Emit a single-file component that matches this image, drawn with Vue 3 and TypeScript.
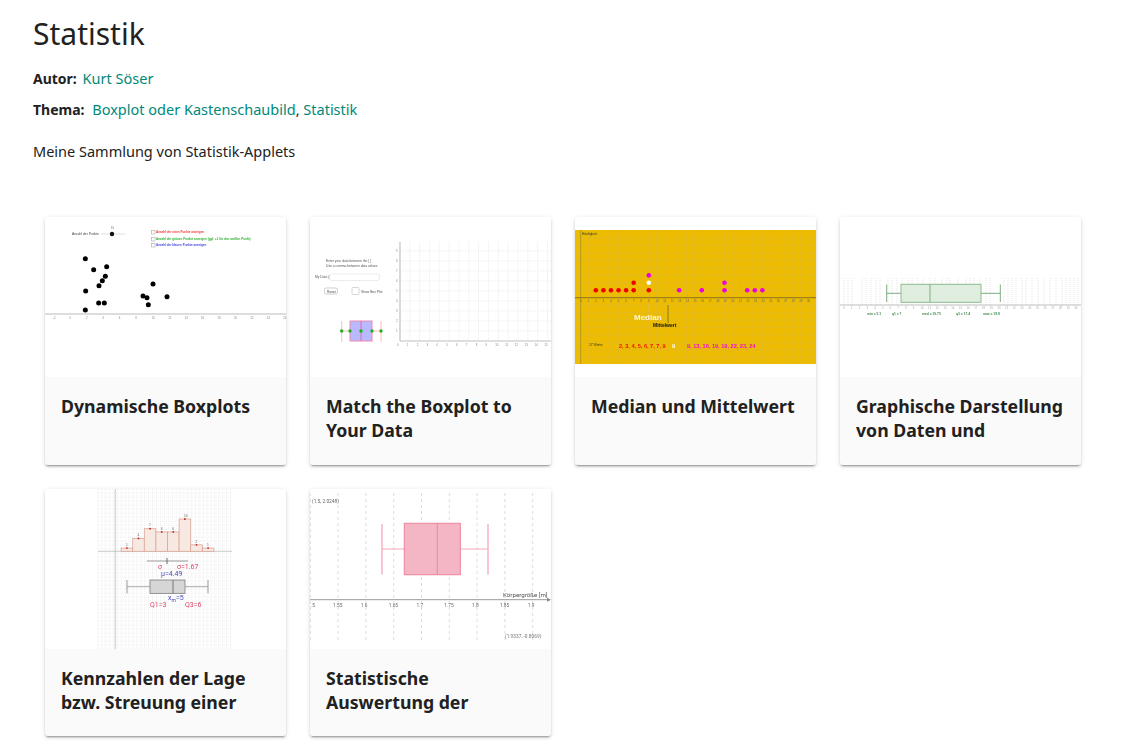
<script setup lang="ts">
const range = (a: number, b: number) => Array.from({ length: b - a + 1 }, (_, i) => a + i)

const cards = [
  { id: 'dyn', title: 'Dynamische Boxplots' },
  { id: 'match', title: 'Match the Boxplot to Your Data' },
  { id: 'median', title: 'Median und Mittelwert' },
  { id: 'graph', title: 'Graphische Darstellung von Daten und' },
  { id: 'kenn', title: 'Kennzahlen der Lage bzw. Streuung einer' },
  { id: 'stat', title: 'Statistische Auswertung der' },
]

const dynPoints = [[136,146],[161,179],[200,170],[196,199],[187,212],[177,227],[137,243],[176,279],[193,279],[136,300],[309,258],[321,263],[339,222],[381,260],[325,284]]
  .map(([x, y]) => [x / 3 - 5, y / 3 - 7])
const dynTicks = range(0, 14).map((i) => 8 + i * 16.45)
const dynChecks = [
  { y: 15, c: '#f04040', t: 'Anzahl der roten Punkte anzeigen' },
  { y: 22, c: '#30b030', t: 'Anzahl der grünen Punkte anzeigen (ggf. +1 für den weißen Punkt)' },
  { y: 28, c: '#4848e0', t: 'Anzahl der blauen Punkte anzeigen' },
]

const matchV = range(0, 15).map((i) => 90 + i * 9.83)
const matchH = range(0, 9).map((i) => 124 - i * 10)

const medV = range(0, 31).map((i) => 5.7 + i * 7.57)
const medH = range(-8, 8).map((i) => 80.7 - i * 7.45)
const medPts = [
  ...[2,3,4,5,6,7,9].map((n) => ({ n, l: 1, c: '#ee0000' })),
  { n: 7, l: 2, c: '#ee0000' },
  { n: 9, l: 2, c: '#ffffff' },
  ...[13,16,19,22,23,24].map((n) => ({ n, l: 1, c: '#e800e0' })),
  { n: 19, l: 2, c: '#e800e0' },
  { n: 9, l: 3, c: '#e800e0' },
].map((p) => ({ x: 5.7 + p.n * 7.57, y: 80.7 - p.l * 7.45, c: p.c }))

const graphV = [4,8,12,22,26,31,36,40,48,52,57,62,68,72,78,83,90,95,102,107,110,118,126,130,134,140,146,150,164,168,172,176,182,186,192,198,204,210,216,222,226,230,234,238]
const graphT = range(0, 30).map((i) => 4 + i * 7.7)

const kennV = range(0, 34).map((i) => 53 + i * 3.9)
const kennH = range(0, 40).map((i) => i * 4)
const kennBars = [1,4,7,6,6,10,2,1].map((v, i) => ({
  x: 70.3 + (i + 0.5) * 11.6,
  h: v * 3.23,
  v,
  c: 70.3 + (i + 1) * 11.6,
}))

const statV = range(0, 8).map((i) => 0.3 + i * 27.8)
const statLabels = ['.5','1.55','1.6','1.65','1.7','1.75','1.8','1.85','1.9']
</script>

<template>
  <main class="page">
    <h1 class="heading">Statistik</h1>
    <p class="meta first"><strong>Autor:</strong> <a class="link gap-a">Kurt Söser</a></p>
    <p class="meta"><strong>Thema:</strong> <a class="link gap-b">Boxplot oder Kastenschaubild</a>, <a class="link">Statistik</a></p>
    <p class="desc">Meine Sammlung von Statistik-Applets</p>

    <section class="grid">
      <article v-for="card in cards" :key="card.id" class="card">
        <div class="thumb">
          <svg v-if="card.id === 'dyn'" class="art" viewBox="0 0 241 160">
            <text x="27" y="18" class="t3" fill="#444">Anzahl der Punkte</text>
            <line x1="56" y1="17" x2="80" y2="17" stroke="#ddd" />
            <circle cx="67" cy="17" r="2.2" fill="#111" />
            <text x="66" y="12" class="t2" fill="#666">15</text>
            <g v-for="c in dynChecks" :key="c.y">
              <rect x="106.5" :y="c.y - 1.5" width="3.5" height="3.5" fill="#fff" stroke="#aaa" stroke-width=".6" />
              <text x="111" :y="c.y + 1" class="t2b" :fill="c.c">{{ c.t }}</text>
            </g>
            <line x1="0" y1="97" x2="241" y2="97" stroke="#bbb" stroke-width="1.2" />
            <g v-for="(t, i) in dynTicks" :key="t">
              <text :x="t" y="101.5" class="t2" fill="#888">{{ i * 2 - 2 }}</text>
            </g>
            <circle v-for="p in dynPoints" :key="p[0] + '-' + p[1]" :cx="p[0]" :cy="p[1]" r="2.5" fill="#000" />
          </svg>

          <svg v-else-if="card.id === 'match'" class="art" viewBox="0 0 241 160">
            <line v-for="x in matchV" :key="x" :x1="x" y1="25" :x2="x" y2="124" stroke="#e4e4e4" stroke-width=".6" stroke-dasharray="1.5 1" />
            <line v-for="y in matchH" :key="y" x1="90" :y1="y" x2="241" :y2="y" stroke="#e4e4e4" stroke-width=".6" stroke-dasharray="1.5 1" />
            <line x1="90" y1="25" x2="90" y2="124" stroke="#c4c4c4" stroke-width="1.2" />
            <line x1="90" y1="124" x2="241" y2="124" stroke="#c4c4c4" stroke-width="1.2" />
            <text v-for="(x, i) in matchV" :key="'xl' + x" :x="x - 3" y="128.5" class="t2" fill="#888">{{ i }}</text>
            <text v-for="(y, i) in matchH.slice(1)" :key="'yl' + y" x="86" :y="y + 1" class="t2" fill="#888">{{ i + 1 }}</text>
            <text x="16" y="45" class="t3" fill="#555">Enter your data between the { }</text>
            <text x="16" y="49.5" class="t3" fill="#555">Use a comma between data values</text>
            <text x="5" y="61" class="t3" fill="#555">My Data {}</text>
            <rect x="19.5" y="57" width="50" height="6.5" rx="2" fill="#fff" stroke="#e4e4e4" stroke-width=".7" />
            <rect x="14.5" y="71" width="13" height="6" rx="1.5" fill="#fff" stroke="#bbb" stroke-width=".7" />
            <text x="17" y="75.5" class="t3" fill="#444">Reset</text>
            <rect x="42" y="70.5" width="7" height="7" rx="1" fill="#fff" stroke="#ccc" stroke-width=".8" />
            <text x="51" y="75.5" class="t3" fill="#555">Show Box Plot</text>
            <line x1="31.7" y1="104" x2="31.7" y2="125" stroke="#fbb" />
            <line x1="71" y1="104" x2="71" y2="125" stroke="#fbb" />
            <line x1="31.7" y1="114" x2="71" y2="114" stroke="#fbb" />
            <rect x="40" y="104" width="22" height="20" fill="#b9b9ff" stroke="#f08ab0" />
            <line x1="51" y1="104" x2="51" y2="124" stroke="#e070a0" />
            <circle v-for="x in [31.7, 40, 51, 62, 71]" :key="x" :cx="x" cy="114" r="1.7" fill="#22b022" />
          </svg>

          <svg v-else-if="card.id === 'median'" class="art" viewBox="0 0 241 160">
            <rect x="0" y="13" width="241" height="134" fill="#edbc00" />
            <line v-for="x in medV" :key="x" :x1="x" y1="13" :x2="x" y2="147" stroke="#dcb93a" stroke-width=".5" />
            <line v-for="y in medH" :key="y" x1="0" :y1="y" x2="241" :y2="y" stroke="#dcb93a" stroke-width=".5" />
            <line x1="5.7" y1="13" x2="5.7" y2="147" stroke="#b09a1c" />
            <line x1="0" y1="80.7" x2="241" y2="80.7" stroke="#8a7614" />
            <text x="7" y="18" class="t3" fill="#333">Häufigkeit</text>
            <text v-for="(x, i) in medV.slice(0, 31)" :key="x" :x="x - 0.8" y="85" class="t2" fill="#665">{{ i }}</text>
            <circle v-for="p in medPts" :key="p.x + '-' + p.y" :cx="p.x" :cy="p.y" r="2.3" :fill="p.c" />
            <line x1="74" y1="88" x2="74" y2="95" stroke="#d8c050" />
            <line x1="93" y1="88" x2="93" y2="106" stroke="#887a20" />
            <text x="59" y="103" class="t-med" fill="#fff7d0">Median</text>
            <text x="78" y="110" class="t-mit" fill="#111">Mittelwert</text>
            <text x="14" y="129" class="t3" fill="#333">17 Werte:</text>
            <text x="44" y="131" class="t-ser" fill="#ee1500">2, 3, 4, 5, 6, 7, 7, 9</text>
            <text x="97" y="131" class="t-ser" fill="#fff">9</text>
            <text x="112" y="131" class="t-ser" fill="#ee10d0">9, 13, 16, 19, 19, 22, 23, 24</text>
          </svg>

          <svg v-else-if="card.id === 'graph'" class="art" viewBox="0 0 241 160">
            <line v-for="x in graphV" :key="x" :x1="x" y1="61" :x2="x" y2="88" stroke="#d4d4d4" stroke-width=".6" stroke-dasharray="1 1" />
            <line x1="0" y1="88" x2="241" y2="88" stroke="#c0c0c0" stroke-width="1.1" />
            <text v-for="(x, i) in graphT" :key="x" :x="x - .6" y="91.5" class="t2" fill="#aaa">{{ i }}</text>
            <rect x="61" y="67.3" width="80" height="18" fill="#e0eee0" stroke="#8dbb8d" stroke-width="1" />
            <line x1="90" y1="67.3" x2="90" y2="85.3" stroke="#8dbb8d" stroke-width="1.2" />
            <line x1="46.7" y1="67.5" x2="46.7" y2="85" stroke="#7fae7f" />
            <line x1="160.3" y1="67.5" x2="160.3" y2="85" stroke="#7fae7f" />
            <line x1="46.7" y1="76.3" x2="61" y2="76.3" stroke="#7fae7f" />
            <line x1="141" y1="76.3" x2="160.3" y2="76.3" stroke="#7fae7f" />
            <text x="27" y="97.5" class="t3b">min = 5.1</text>
            <text x="52" y="97.5" class="t3b">q1 = 7</text>
            <text x="82" y="97.5" class="t3b">med = 10.75</text>
            <text x="116" y="97.5" class="t3b">q3 = 17.4</text>
            <text x="143" y="97.5" class="t3b">max = 19.9</text>
          </svg>

          <svg v-else-if="card.id === 'kenn'" class="art" viewBox="0 0 241 160">
            <line v-for="x in kennV" :key="x" :x1="x" y1="0" :x2="x" y2="160" stroke="#dedede" stroke-width=".5" stroke-dasharray="1 1" />
            <line v-for="y in kennH" :key="y" x1="53" :y1="y" x2="187" :y2="y" stroke="#dedede" stroke-width=".5" stroke-dasharray="1 1" />
            <line x1="70.3" y1="0" x2="70.3" y2="160" stroke="#b4b4b4" stroke-width=".7" />
            <line x1="53" y1="62.3" x2="187" y2="62.3" stroke="#b4b4b4" stroke-width=".7" />
            <g v-for="b in kennBars" :key="b.x">
              <rect :x="b.x" :y="62.3 - b.h" width="11.6" :height="b.h" fill="#f8e8e2" stroke="#d9a898" stroke-width=".8" />
              <circle :cx="b.c" :cy="62.3 - b.h" r=".9" fill="#c02020" />
              <text :x="b.c - 1" :y="60 - b.h" class="t3" fill="#666">{{ b.v }}</text>
            </g>
            <line x1="102" y1="72" x2="143" y2="72" stroke="#999" />
            <line x1="122" y1="69" x2="122" y2="75" stroke="#666" />
            <text x="113" y="79.5" class="t5" fill="#dd4468">σ</text>
            <text x="132" y="79.5" class="t5" fill="#dd4468">σ=1.67</text>
            <text x="116" y="87" class="t5" fill="#4848c0">μ=4.49</text>
            <rect x="105" y="91" width="35" height="13.4" fill="#d6d6d6" stroke="#888" stroke-width=".9" />
            <line x1="128" y1="91" x2="128" y2="104.4" stroke="#777" />
            <line x1="82" y1="97.7" x2="105" y2="97.7" stroke="#aaa" />
            <line x1="140" y1="97.7" x2="163" y2="97.7" stroke="#aaa" />
            <line x1="82" y1="91" x2="82" y2="104.4" stroke="#999" />
            <line x1="163" y1="91" x2="163" y2="104.4" stroke="#999" />
            <text x="105" y="117.5" class="t5" fill="#dd4468">Q1=3</text>
            <text x="123" y="111" class="t5" fill="#4848c0">x<tspan dy="1.5" font-size="5">m</tspan><tspan dy="-1.5">=5</tspan></text>
            <text x="140" y="117.5" class="t5" fill="#dd4468">Q3=6</text>
          </svg>

          <svg v-else class="art" viewBox="0 0 241 160">
            <line v-for="x in statV" :key="x" :x1="x" y1="4" :x2="x" y2="152" stroke="#cfcfcf" stroke-width=".7" stroke-dasharray="3 3" />
            <text x="2" y="14" class="t4" fill="#666">(1.5, 2.0248)</text>
            <line x1="72" y1="60" x2="178" y2="60" stroke="#f5a8b8" />
            <line x1="72" y1="35" x2="72" y2="85.5" stroke="#f5a8b8" stroke-width="1.3" />
            <line x1="178" y1="35" x2="178" y2="85.5" stroke="#f5a8b8" stroke-width="1.3" />
            <rect x="94.3" y="34.3" width="56" height="51.4" fill="#f4b6c4" stroke="#ec8aa2" stroke-width="1.1" />
            <line x1="127.3" y1="34.3" x2="127.3" y2="85.7" stroke="#ec8aa2" stroke-width="1.1" />
            <line x1="0" y1="110.7" x2="240" y2="110.7" stroke="#999" />
            <path d="M237 108.7 L241 110.7 L237 112.7 Z" fill="#888" />
            <text v-for="(l, i) in statLabels" :key="l" :x="i === 0 ? 1 : statV[i] - 5" y="118" class="t4" fill="#666">{{ l }}</text>
            <text x="193" y="108" class="t5b" fill="#555">Körpergröße [m]</text>
            <text x="195" y="149" class="t4" fill="#777">(1.9337, -0.8069)</text>
          </svg>
        </div>
        <div class="body">
          <h2 class="title">{{ card.title }}</h2>
        </div>
      </article>
    </section>
  </main>
</template>

<style>
html, body { background: #fff; }
</style>

<style scoped>
.page {
  font-family: "Noto Sans", "Open Sans", sans-serif;
  color: #212121;
  padding: 0 33px;
  font-size: 14.5px;
}
.heading {
  margin: 0;
  padding-top: 15px;
  font-size: 30px;
  line-height: 38px;
  font-weight: 400;
}
.meta {
  margin: 0;
  line-height: 20px;
  padding-top: 11px;
}
.meta.first { padding-top: 15px; }
.meta:not(.first) { padding-top: 10px; }
.meta strong { font-weight: 700; font-size: 14px; }
.link { color: #00897b; }
.gap-a { margin-left: 2px; }
.gap-b { margin-left: 4px; }
.desc {
  margin: 21px 0 0;
  line-height: 20px;
}
.grid {
  display: grid;
  grid-template-columns: repeat(4, 241px);
  gap: 24px;
  margin: 56px 0 0 12px;
  padding-bottom: 16px;
}
.card {
  height: 247.5px;
  border-radius: 3px;
  overflow: hidden;
  background: #fafafa;
  box-shadow: 0 2px 2px 0 rgba(0, 0, 0, .14), 0 3px 1px -2px rgba(0, 0, 0, .2), 0 1px 5px 0 rgba(0, 0, 0, .12);
}
.thumb { height: 160px; background: #fff; }
.art { display: block; width: 241px; height: 160px; filter: blur(.7px); }
.body { padding: 17px 10px 16px 16px; }
.title {
  margin: 0;
  font-size: 17.7px;
  line-height: 24px;
  font-weight: 700;
}
.t2 { font-size: 2.8px; font-family: "Liberation Sans", sans-serif; }
.t2b { font-size: 3px; font-weight: 700; font-family: "Liberation Sans", sans-serif; }
.t3 { font-size: 3.3px; font-family: "Liberation Sans", sans-serif; }
.t3b { font-size: 3.3px; font-weight: 700; font-family: "Liberation Sans", sans-serif; fill: #3f8a4f; }
.t4 { font-size: 4.8px; font-family: "Roboto", sans-serif; }
.t5 { font-size: 7px; font-family: "Roboto", sans-serif; }
.t5b { font-size: 6.2px; font-family: "Roboto", sans-serif; }
.t-med { font-size: 8px; font-weight: 700; font-family: "Liberation Sans", sans-serif; }
.t-mit { font-size: 5px; font-weight: 700; font-family: "Liberation Sans", sans-serif; }
.t-ser { font-size: 5.6px; font-weight: 700; font-family: "Liberation Sans", sans-serif; }
</style>
